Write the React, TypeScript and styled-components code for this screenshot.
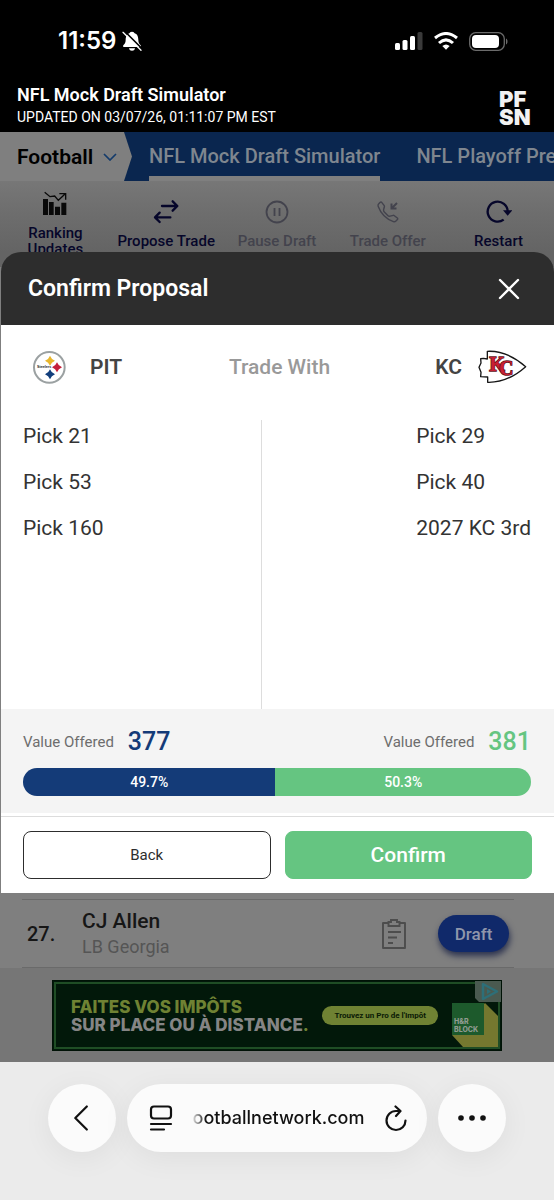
import React from "react";
import styled, { createGlobalStyle } from "styled-components";

const GlobalStyle = createGlobalStyle`
  *, *::before, *::after { box-sizing: border-box; }
  html, body { margin: 0; padding: 0; }
  body { background: #ebebeb; font-family: Roboto, "Liberation Sans", sans-serif; }
  button { font: inherit; border: 0; padding: 0; background: none; color: inherit; cursor: pointer; }
  h1, h2, p, ul, ol { margin: 0; padding: 0; }
  ul, ol { list-style: none; }
  a { color: inherit; text-decoration: none; }
  svg { display: block; flex: none; }
`;

const Page = styled.div`
  display: flex;
  flex-direction: column;
  min-height: 100vh;
  overflow-x: hidden;
  background: #7f7f7f;
`;

/* Status bar */
const StatusBar = styled.div`
  display: flex;
  justify-content: space-between;
  align-items: center;
  height: 84px;
  padding: 0 46px 2px 58px;
  background: #000;
  color: #fff;
`;
const Clock = styled.div`
  display: flex;
  align-items: center;
  gap: 6px;
  font: 600 24px/28px Inter, sans-serif;
`;
const StatusIcons = styled.div`
  display: flex;
  align-items: center;
  gap: 11px;
`;

/* Site header */
const SiteHeader = styled.header`
  display: flex;
  justify-content: space-between;
  align-items: center;
  height: 48px;
  padding: 0 22px 4px 17px;
  background: #000;
  color: #fff;
`;
const SiteTitle = styled.h1`
  font-size: 18px;
  font-weight: 600;
  line-height: 22px;
`;
const Updated = styled.p`
  font-size: 14px;
  line-height: 22px;
`;
const Brand = styled.a`
  display: flex;
  flex-direction: column;
  width: 33px;
  padding-top: 3px;
  font: 900 22px/18px Inter, sans-serif;
  color: #f2f2f2;
`;

/* Sport navigation */
const Nav = styled.nav`
  display: flex;
  height: 49px;
  overflow: hidden;
  background: #0a264f;
`;
const SportButton = styled.button`
  display: flex;
  flex: none;
  align-items: center;
  gap: 10px;
  width: 132px;
  padding-left: 17px;
  background: #7f7f7f;
  clip-path: polygon(0 0, 124px 0, 100% 50%, 124px 100%, 0 100%);
  font-size: 21px;
  font-weight: 600;
`;
const NavLink = styled.a<{ $active?: boolean }>`
  flex: none;
  height: 49px;
  margin: 0 19px 0 17px;
  border-bottom: 5px solid ${(p) => (p.$active ? "#7f7f7f" : "transparent")};
  color: #7f868f;
  font-size: 20px;
  font-weight: 500;
  line-height: 49px;
  white-space: nowrap;
`;

/* Draft tools */
const Tools = styled.div`
  display: grid;
  grid-template-columns: repeat(5, 1fr);
  height: 86px;
  background: linear-gradient(#777, #6e6e6e 30px, #646464 71px);
`;
const Tool = styled.button<{ $muted?: boolean }>`
  display: flex;
  flex-direction: column;
  align-items: center;
  justify-content: center;
  gap: 8px;
  color: ${(p) => (p.$muted ? "#43434d" : "#06062a")};
  font-size: 15px;
  font-weight: 500;
  line-height: 16px;
`;

/* Trade dialog */
const Dialog = styled.section`
  position: relative;
  display: flex;
  flex: 1 0 auto;
  flex-direction: column;
  margin-top: -15px;
  padding-left: 1px;
  border-radius: 20px 20px 0 0;
`;
const DialogHeader = styled.header`
  display: flex;
  align-items: center;
  justify-content: space-between;
  height: 73px;
  padding: 0 34px 0 27px;
  border-radius: 20px 20px 0 0;
  background: #2d2d2d;
  color: #fff;
`;
const DialogTitle = styled.h2`
  font-size: 23px;
  font-weight: 600;
`;
const DialogBody = styled.div`
  display: flex;
  flex: 1 0 auto;
  flex-direction: column;
  background: #fff;
`;
const Teams = styled.div`
  display: grid;
  grid-template-columns: 1fr auto 1fr;
  align-items: center;
  height: 84px;
  padding: 0 27px 0 31px;
  color: #444;
  font-size: 21px;
  font-weight: 600;
`;
const Team = styled.div<{ $end?: boolean }>`
  display: flex;
  align-items: center;
  justify-content: ${(p) => (p.$end ? "flex-end" : "flex-start")};
  gap: ${(p) => (p.$end ? 16 : 23)}px;
`;
const TradeWith = styled.span`
  color: #999;
  font-weight: 500;
`;
const Assets = styled.div`
  display: grid;
  grid-template-columns: 47fr 53fr;
  flex: 1 0 auto;
  min-height: 288px;
  margin-top: 11px;
`;
const AssetSide = styled.div<{ $end?: boolean }>`
  display: flex;
  justify-content: ${(p) => (p.$end ? "flex-end" : "flex-start")};
  padding: 4px 23px 0 22px;
  border-left: ${(p) => (p.$end ? "1px solid #ddd" : "0")};
`;
const AssetList = styled.ul`
  display: flex;
  flex-direction: column;
  gap: 22px;
  color: #333;
  font-size: 21px;
  line-height: 24px;
`;
const Values = styled.div`
  padding: 17px 23px 17px 22px;
  background: #f4f4f4;
`;
const ValueRow = styled.div`
  display: flex;
  justify-content: space-between;
  margin-bottom: 10px;
`;
const Value = styled.div<{ $tone: string }>`
  display: flex;
  align-items: center;
  gap: 14px;
  color: #6d6d6d;
  font-size: 15px;
  line-height: 32px;

  strong {
    color: ${(p) => p.$tone};
    font-size: 25px;
    font-weight: 500;
  }
`;
const ShareBar = styled.div`
  display: flex;
  height: 28px;
  overflow: hidden;
  border-radius: 14px;
`;
const Share = styled.div<{ $tone: string }>`
  background: ${(p) => p.$tone};
  color: #fff;
  font-size: 14px;
  font-weight: 500;
  line-height: 28px;
  text-align: center;
`;
const Actions = styled.footer`
  display: flex;
  gap: 14px;
  margin-top: 3px;
  padding: 14px 22px 14px 22px;
  border-top: 1px solid #dcdcdc;
`;
const ActionButton = styled.button<{ $primary?: boolean }>`
  flex: 1;
  height: 48px;
  border: 1px solid ${(p) => (p.$primary ? "#65c581" : "#2d2d2d")};
  border-radius: 8px;
  background: ${(p) => (p.$primary ? "#65c581" : "#fff")};
  color: ${(p) => (p.$primary ? "#fff" : "#2d2d2d")};
  font-size: ${(p) => (p.$primary ? 21 : 15)}px;
  font-weight: ${(p) => (p.$primary ? 500 : 400)};
`;

/* Player board */
const Board = styled.ol`
  padding: 6px 40px 0 22px;
  background: #7f7f7f;
`;
const PlayerRow = styled.li`
  display: flex;
  align-items: center;
  height: 69px;
  padding: 0 5px;
  border-top: 1px solid #6a6a6a;
  border-bottom: 1px solid #6a6a6a;
`;
const Rank = styled.span`
  width: 55px;
  color: #161616;
  font-size: 20px;
  font-weight: 500;
`;
const Player = styled.div`
  flex: 1;
  color: #161616;
  font-size: 21px;
  font-weight: 500;
  line-height: 26px;
`;
const Position = styled.p`
  color: #555;
  font-size: 18px;
  font-weight: 400;
`;
const NoteButton = styled.button`
  margin-right: 32px;
`;
const DraftButton = styled.button`
  width: 71px;
  height: 37px;
  border-radius: 19px;
  background: #10296a;
  box-shadow: 1px 4px 6px #2c3350;
  color: #8f96ab;
  font-size: 17px;
  font-weight: 500;
`;

/* Banner */
const BannerArea = styled.aside`
  display: flex;
  justify-content: center;
  padding: 12px 52px 11px;
  background: #767676;
`;
const Banner = styled.a`
  position: relative;
  display: flex;
  flex: 0 1 451px;
  align-items: center;
  height: 71px;
  padding: 0 3px 0 18px;
  border: 1px solid #001206;
  outline: 2px solid #1f4d25;
  outline-offset: -4px;
  background: #02180a;
`;
const BannerText = styled.p`
  flex: 1;
  color: #858585;
  font: 800 17px/18px Inter, sans-serif;
  white-space: nowrap;

  em {
    color: #6f8233;
    font-style: normal;
  }
`;
const BannerCta = styled.span`
  flex: none;
  margin-right: 14px;
  padding: 0 12px;
  border-radius: 10px;
  background: #6f8233;
  color: #0a1a05;
  font: 700 8px/19px Roboto, sans-serif;
`;
const SponsorMark = styled.span`
  display: flex;
  position: relative;
  align-self: flex-end;
  margin-bottom: 3px;
`;
const SponsorName = styled.span`
  position: absolute;
  left: 2px;
  bottom: 13px;
  display: flex;
  flex-direction: column;
  color: #8f9a90;
  font: 800 7px/8px Inter, sans-serif;
`;
const AdChoices = styled.span`
  position: absolute;
  top: 0;
  right: 0;
`;

/* Browser controls */
const BrowserBar = styled.div`
  display: flex;
  gap: 11px;
  height: 138px;
  padding: 22px 48px 0;
  background: #ebebeb;
`;
const RoundButton = styled.button`
  display: flex;
  flex: none;
  align-items: center;
  justify-content: center;
  width: 68px;
  height: 68px;
  border-radius: 34px;
  background: #fbfbfb;
  box-shadow: 0 6px 30px rgba(0, 0, 0, 0.06);
`;
const AddressPill = styled.div`
  display: flex;
  flex: 1;
  align-items: center;
  justify-content: space-between;
  height: 68px;
  padding: 0 19px 0 22px;
  border-radius: 34px;
  background: #fbfbfb;
  box-shadow: 0 6px 30px rgba(0, 0, 0, 0.06);
`;
const Address = styled.button`
  font: 500 18px/24px Inter, sans-serif;
  color: #111;
  mask-image: linear-gradient(to right, rgba(0, 0, 0, 0.15), #000 13px);
`;

const star = (cx: number, cy: number) =>
  `M${cx} ${cy - 15}Q${cx + 4} ${cy - 4} ${cx + 15} ${cy}Q${cx + 4} ${cy + 4} ${cx} ${cy + 15}Q${cx - 4} ${cy + 4} ${cx - 15} ${cy}Q${cx - 4} ${cy - 4} ${cx} ${cy - 15}Z`;

const BellOffIcon = () => (
  <svg width="20" height="21" viewBox="0 0 60 63">
    <path d="M30 2c-5 0-7 3-8 5C13 10 11 19 11 27c0 8-3 12-7 16-2 3-1 5 2 5h48c3 0 4-2 2-5-4-4-7-8-7-16 0-8-2-17-11-20-1-2-3-5-8-5Z" fill="#fff" />
    <path d="M21 52h18c-1 10-17 10-18 0Z" fill="#fff" />
    <path d="M7 0 62 55" stroke="#000" strokeWidth="5" />
    <path d="M3 4 57 58" stroke="#fff" strokeWidth="4" strokeLinecap="round" />
  </svg>
);

const SignalIcon = () => (
  <svg width="28" height="18" viewBox="0 0 28 18">
    <rect x="0" y="11" width="5" height="7" rx="1.5" fill="#fff" />
    <rect x="7.5" y="8" width="5" height="10" rx="1.5" fill="#fff" />
    <rect x="15" y="4" width="5" height="14" rx="1.5" fill="#fff" />
    <rect x="22.5" y="0" width="5" height="18" rx="1.5" fill="#3a3a3a" />
  </svg>
);

const WifiIcon = () => (
  <svg width="24" height="18" viewBox="0 0 72 54" fill="none" stroke="#fff" strokeWidth="9">
    <path d="M3 18Q36-9 69 18" />
    <path d="M15 33Q36 14 57 33" />
    <path d="M36 53 25 42Q36 33 47 42Z" fill="#fff" stroke="none" />
  </svg>
);

const BatteryIcon = () => (
  <svg width="39" height="19" viewBox="0 0 39 19">
    <rect x="0.7" y="0.7" width="34.6" height="17.6" rx="6" fill="none" stroke="#6b6b6b" strokeWidth="1.3" />
    <rect x="3" y="3" width="27" height="13" rx="4" fill="#fff" />
    <path d="M37 6.5c2 1 2 5 0 6Z" fill="#6b6b6b" />
  </svg>
);

const RankingIcon = () => (
  <svg width="26" height="26" viewBox="0 0 78 78">
    <path d="M3 24h15v48H3zM21 33h14v39H21zM39 47h15v25H39zM58 35h15v37H58z" fill="#090909" />
    <path d="M8 4 24 17l14-2 11 13L70 8M52 8h19v18" fill="none" stroke="#090909" strokeWidth="4" />
  </svg>
);

const SwapIcon = () => (
  <svg width="26" height="26" viewBox="0 0 78 78" fill="none" stroke="currentColor" strokeWidth="7" strokeLinecap="round" strokeLinejoin="round">
    <path d="M27 21h45M59 7l14 14-14 14M52 55H7M20 41 6 55l14 14" />
  </svg>
);

const PauseIcon = () => (
  <svg width="26" height="26" viewBox="0 0 26 26" fill="none" stroke="currentColor" strokeWidth="1.8">
    <circle cx="13" cy="13" r="10.5" />
    <path d="M10.5 9v8M15.5 9v8" />
  </svg>
);

const PhoneIcon = () => (
  <svg width="26" height="26" viewBox="0 0 26 26" fill="none" stroke="currentColor">
    <path
      transform="translate(1.5 1.5) scale(1.42)"
      strokeWidth="1"
      d="M3.65 1.33a.68.68 0 0 0-1.01-.06L1.6 2.3c-.48.48-.66 1.17-.45 1.77a17.6 17.6 0 0 0 4.17 6.61 17.6 17.6 0 0 0 6.61 4.17c.6.21 1.29.03 1.77-.45l1.03-1.03a.68.68 0 0 0-.06-1.02l-2.31-1.79a.68.68 0 0 0-.58-.12l-2.19.55a1.75 1.75 0 0 1-1.66-.46L5.48 8.06a1.75 1.75 0 0 1-.46-1.66l.55-2.19a.68.68 0 0 0-.12-.58z"
    />
    <path d="m22 4-5 5M16.5 4.5v5h5" strokeWidth="2" />
  </svg>
);

const RestartIcon = () => (
  <svg width="26" height="26" viewBox="0 0 78 78">
    <path d="M65 38A30 30 0 1 0 53 62" fill="none" stroke="currentColor" strokeWidth="7" />
    <path d="M51 34h28L65 50Z" fill="currentColor" />
  </svg>
);

const SteelersLogo = () => (
  <svg width="35" height="35" viewBox="0 0 105 105" role="img" aria-label="Pittsburgh Steelers">
    <circle cx="52" cy="52" r="46" fill="#fff" stroke="#9ba1a2" strokeWidth="6" />
    <path d={star(54, 32)} fill="#e8b72d" />
    <path d={star(75, 52)} fill="#c4203a" />
    <path d={star(54, 73)} fill="#123e7c" />
    <text x="15" y="54" fontFamily="Liberation Sans, sans-serif" fontWeight="700" fontSize="11" fill="#222">Steelers</text>
  </svg>
);

const ChiefsLogo = () => (
  <svg width="49" height="34" viewBox="0 0 147 102" role="img" aria-label="Kansas City Chiefs">
    <path d="M28 4c35-2 77 13 115 46-36 32-78 48-114 47V81l-21-1 1-13-6-15 6-13-1-13 8-1 12 2Z" fill="#fff" stroke="#161616" strokeWidth="4" strokeLinejoin="round" />
    <text
      x="34"
      y="62"
      fontFamily="Liberation Serif, serif"
      fontWeight="700"
      fontSize="60"
      fill="#c92032"
      stroke="#5c1018"
      strokeWidth="4"
      paintOrder="stroke"
    >
      K
      <tspan x="63" y="74">C</tspan>
    </text>
  </svg>
);

const ClipboardIcon = () => (
  <svg width="24" height="30" viewBox="0 0 24 30" fill="none" stroke="#4d4d4d" strokeWidth="1.9">
    <path d="M6 4H1v25h22V4h-5" strokeLinejoin="round" />
    <path d="M6.5 7V3H9V1h6v2h2.5v4Z" />
    <path d="M6 13h13M6 18.5h9M6 24h5" />
  </svg>
);

const tools = [
  { label: "Ranking Updates", icon: <RankingIcon />, narrow: true },
  { label: "Propose Trade", icon: <SwapIcon /> },
  { label: "Pause Draft", icon: <PauseIcon />, muted: true },
  { label: "Trade Offer", icon: <PhoneIcon />, muted: true },
  { label: "Restart", icon: <RestartIcon /> },
];

const ToolLabel = styled.span<{ $narrow?: boolean }>`
  max-width: ${(p) => (p.$narrow ? "80px" : "none")};
`;

const offered = ["Pick 21", "Pick 53", "Pick 160"];
const requested = ["Pick 29", "Pick 40", "2027 KC 3rd"];
const navy = "#143b78";
const green = "#65c581";
const shares = [
  { percent: 49.7, tone: navy },
  { percent: 50.3, tone: green },
];

export default function App() {
  return (
    <Page>
      <GlobalStyle />
      <StatusBar>
        <Clock>
          11:59
          <BellOffIcon />
        </Clock>
        <StatusIcons>
          <SignalIcon />
          <WifiIcon />
          <BatteryIcon />
        </StatusIcons>
      </StatusBar>

      <SiteHeader>
        <div>
          <SiteTitle>NFL Mock Draft Simulator</SiteTitle>
          <Updated>UPDATED ON 03/07/26, 01:11:07 PM EST</Updated>
        </div>
        <Brand href="#home">
          <span>PF</span>
          <span>SN</span>
        </Brand>
      </SiteHeader>

      <Nav>
        <SportButton>
          Football
          <svg width="14" height="8" viewBox="0 0 14 8" fill="none" stroke="#143b6b" strokeWidth="1.7">
            <path d="m1 1 6 6 6-6" />
          </svg>
        </SportButton>
        <NavLink href="#draft" $active>NFL Mock Draft Simulator</NavLink>
        <NavLink href="#playoffs">NFL Playoff Predictor</NavLink>
      </Nav>

      <Tools>
        {tools.map((t) => (
          <Tool key={t.label} $muted={t.muted}>
            {t.icon}
            <ToolLabel $narrow={t.narrow}>{t.label}</ToolLabel>
          </Tool>
        ))}
      </Tools>

      <Dialog role="dialog" aria-labelledby="dialog-title">
        <DialogHeader>
          <DialogTitle id="dialog-title">Confirm Proposal</DialogTitle>
          <button aria-label="Close">
            <svg width="22" height="22" viewBox="0 0 22 22" stroke="#fff" strokeWidth="2.4" strokeLinecap="round">
              <path d="m2 2 18 18M20 2 2 20" />
            </svg>
          </button>
        </DialogHeader>
        <DialogBody>
          <Teams>
            <Team>
              <SteelersLogo />
              PIT
            </Team>
            <TradeWith>Trade With</TradeWith>
            <Team $end>
              KC
              <ChiefsLogo />
            </Team>
          </Teams>
          <Assets>
            <AssetSide>
              <AssetList>
                {offered.map((a) => (
                  <li key={a}>{a}</li>
                ))}
              </AssetList>
            </AssetSide>
            <AssetSide $end>
              <AssetList>
                {requested.map((a) => (
                  <li key={a}>{a}</li>
                ))}
              </AssetList>
            </AssetSide>
          </Assets>
          <Values>
            <ValueRow>
              <Value $tone={navy}>
                Value Offered <strong>377</strong>
              </Value>
              <Value $tone={green}>
                Value Offered <strong>381</strong>
              </Value>
            </ValueRow>
            <ShareBar>
              {shares.map((s) => (
                <Share key={s.percent} $tone={s.tone} style={{ width: `${s.percent}%` }}>
                  {s.percent}%
                </Share>
              ))}
            </ShareBar>
          </Values>
          <Actions>
            <ActionButton>Back</ActionButton>
            <ActionButton $primary>Confirm</ActionButton>
          </Actions>
        </DialogBody>
      </Dialog>

      <Board>
        <PlayerRow>
          <Rank>27.</Rank>
          <Player>
            CJ Allen
            <Position>LB Georgia</Position>
          </Player>
          <NoteButton aria-label="Scouting report">
            <ClipboardIcon />
          </NoteButton>
          <DraftButton>Draft</DraftButton>
        </PlayerRow>
      </Board>

      <BannerArea>
        <Banner href="#offer">
          <BannerText>
            <em>FAITES VOS IMPÔTS</em>
            <br />
            SUR PLACE OU À DISTANCE<em>.</em>
          </BannerText>
          <BannerCta>Trouvez un Pro de l'Impôt</BannerCta>
          <SponsorMark>
            <svg width="46" height="45" viewBox="0 0 46 45">
              <path d="M33 1 46 14v31H11L0 33Z" fill="#75782f" />
              <rect x="0" y="1" width="32" height="32" fill="#1d5a2c" />
            </svg>
            <SponsorName>
              <span>H&amp;R</span>
              <span>BLOCK</span>
            </SponsorName>
          </SponsorMark>
          <AdChoices>
            <svg width="26" height="21" viewBox="0 0 26 21">
              <path d="M0 0h26v21H4l-4-4Z" fill="#4a5a50" />
              <path d="M8 3v15l14-7.5Z" fill="none" stroke="#2d6f78" strokeWidth="2.5" strokeLinejoin="round" />
              <path d="M12 8v5l4-2.5Z" fill="#2d6f78" />
            </svg>
          </AdChoices>
        </Banner>
      </BannerArea>

      <BrowserBar>
        <RoundButton aria-label="Back to previous page">
          <svg width="16" height="26" viewBox="0 0 16 26" fill="none" stroke="#111" strokeWidth="2.2" strokeLinecap="round" strokeLinejoin="round">
            <path d="M12 1.500 0.500 13l11.500 11.500" transform="translate(0.8 0)" />
          </svg>
        </RoundButton>
        <AddressPill>
          <button aria-label="Page menu">
            <svg width="24" height="26" viewBox="0 0 24 26" fill="none" stroke="#111" strokeWidth="2.2" strokeLinecap="round">
              <rect x="2" y="1.5" width="20" height="12" rx="3" />
              <path d="M2 19h20M2 24.5h13" />
            </svg>
          </button>
          <Address>ootballnetwork.com</Address>
          <button aria-label="Reload">
            <svg width="24" height="27" viewBox="0 0 24 27" fill="none" stroke="#111" strokeWidth="2.2" strokeLinecap="round" strokeLinejoin="round">
              <path d="M21.500 15.500A9.500 9.500 0 1 1 12 6h4M11.500 1.500 16.500 6l-4.500 5" />
            </svg>
          </button>
        </AddressPill>
        <RoundButton aria-label="More">
          <svg width="28" height="6" viewBox="0 0 28 6" fill="#111">
            <circle cx="3" cy="3" r="2.8" />
            <circle cx="14" cy="3" r="2.8" />
            <circle cx="25" cy="3" r="2.8" />
          </svg>
        </RoundButton>
      </BrowserBar>
    </Page>
  );
}
